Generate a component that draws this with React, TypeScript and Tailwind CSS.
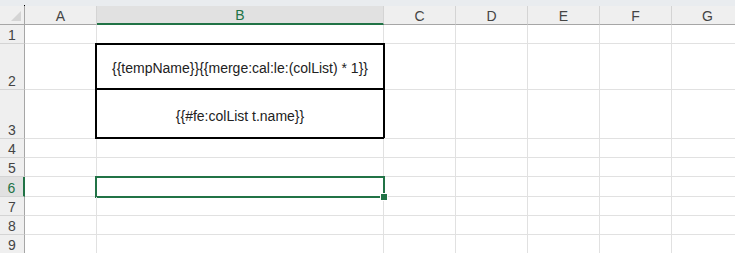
import React from 'react';

const cols = ['A', 'B', 'C', 'D', 'E', 'F', 'G'];
const colWidths = ['w-[72px]', 'w-[287px]', 'w-[72px]', 'w-[72px]', 'w-[72px]', 'w-[72px]', 'w-[72px]'];
const rowHeights = ['h-[19px]', 'h-[46px]', 'h-[49px]', 'h-[19px]', 'h-[19px]', 'h-[20px]', 'h-[19px]', 'h-[19px]', 'h-[19px]'];

const HeaderRow: React.FC = () => (
  <div className="flex h-[19px]">
    <div className="w-[25px] shrink-0 flex items-end justify-end pr-[3px] pb-[3px] border-r border-b border-[#a6a6a6] bg-[#efefef]">
      <svg width="10" height="10" viewBox="0 0 10 10">
        <polygon points="10,0 10,10 0,10" fill="#d4d4d4" />
      </svg>
    </div>
    {cols.map((c, i) => {
      const active = c === 'B';
      return (
        <div
          key={c}
          className={
            colWidths[i] +
            ' shrink-0 flex items-center justify-center pt-[2px] border-r border-[#d4d4d4] ' +
            (active ? 'bg-[#e1e1e1] border-b-2 border-b-[#217346] text-[#217346]' : 'bg-[#efefef] border-b border-b-[#a6a6a6] text-[#444]')
          }
        >
          {c}
        </div>
      );
    })}
  </div>
);

const Cell: React.FC<{ row: number; col: number }> = ({ row, col }) => {
  const r = row + 1;
  const isB = col === 1;
  let content: React.ReactNode = null;
  let overlay: React.ReactNode = null;

  if (isB && r === 2) {
    content = <span>{'{{tempName}}{{merge:cal:le:(colList) * 1}}'}</span>;
    overlay = <div className="absolute left-[-2px] top-[-1px] right-[-2px] bottom-[-1px] border-2 border-black pointer-events-none" />;
  }
  if (isB && r === 3) {
    content = <span>{'{{#fe:colList t.name}}'}</span>;
    overlay = <div className="absolute left-[-2px] top-[-1px] right-[-2px] bottom-[-1px] border-2 border-t-0 border-black pointer-events-none" />;
  }
  if (isB && r === 6) {
    overlay = (
      <>
        <div className="absolute left-[-2px] top-[-1px] right-[-2px] bottom-[-2px] border-2 border-[#217346] pointer-events-none" />
        <div className="absolute z-10 right-[-5px] bottom-[-5px] w-[8px] h-[8px] bg-[#217346] border border-white" />
      </>
    );
  }

  return (
    <div className={colWidths[col] + ' relative shrink-0 border-r border-b border-[#e1e1e1] flex items-center justify-center pt-1'}>
      {content}
      {overlay}
    </div>
  );
};

export default function App() {
  return (
    <div className="w-[735px] h-[253px] overflow-hidden bg-white font-['Liberation_Sans',Arial,sans-serif]">
      <div className="flex h-[6px] bg-[#e9ecef] pl-[24px] items-end">
        <div className="w-[1px] h-[1px] bg-black" />
      </div>
      <div className="text-[14px]">
        <HeaderRow />
      </div>
      {rowHeights.map((h, ri) => {
        const active = ri === 5;
        return (
          <div key={ri} className={'flex ' + h}>
            <div
              className={
                'w-[25px] shrink-0 flex items-end justify-center pb-[1px] text-[14px] leading-none border-b border-[#d4d4d4] ' +
                (active ? 'bg-[#e1e1e1] border-r-2 border-r-[#217346] text-[#217346]' : 'bg-[#efefef] border-r border-r-[#a6a6a6] text-[#444]')
              }
            >
              {ri + 1}
            </div>
            <div className="flex text-[14px] text-[#222]">
              {cols.map((_, ci) => (
                <Cell key={ci} row={ri} col={ci} />
              ))}
            </div>
          </div>
        );
      })}
    </div>
  );
}
